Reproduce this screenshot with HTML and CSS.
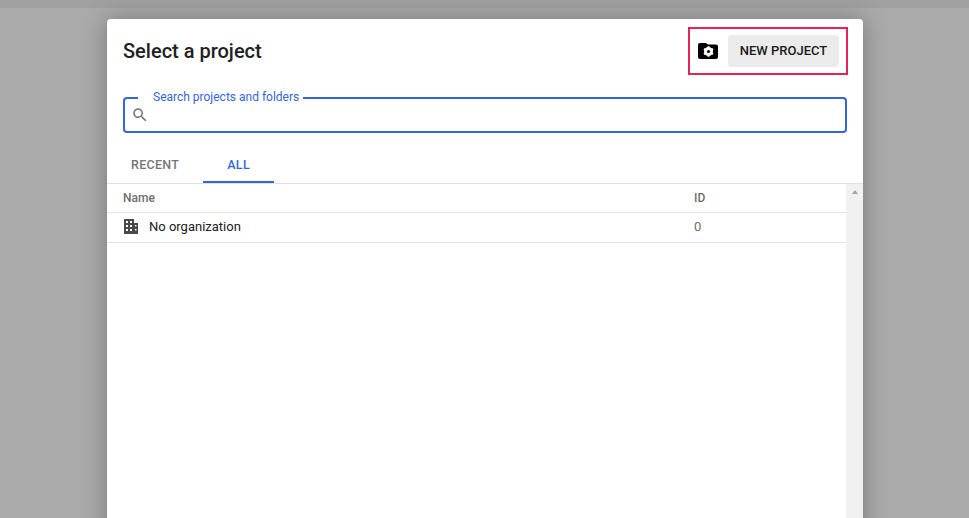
FILE: index.html
```html
<!DOCTYPE html>
<html>
<head>
    <title>Select a project</title>
    <link rel="stylesheet" href="styles.css">
</head>
<body>
    <div class="top-band"></div>

    <div class="dialog">
        <div class="dialog-header">
            <h1 class="dialog-title">Select a project</h1>
            <div class="actions">
                <svg class="folder-icon" viewBox="0 0 20 16" width="20" height="16">
                    <path fill="#000" d="M2 0h6l2 1.500h8a2 2 0 0 1 2 2V14a2 2 0 0 1-2 2H2a2 2 0 0 1-2-2V2a2 2 0 0 1 2-2z" />
                    <circle cx="10.500" cy="8.500" r="3.300" fill="none" stroke="#fff" stroke-width="2.400" />
                    <path stroke="#fff" stroke-width="2" d="M10.500 3.300v10.400M6 5.900l9 5.200M6 11.100l9-5.200" />
                    <circle cx="10.500" cy="8.500" r="1.500" fill="#000" />
                </svg>
                <button class="new-project">NEW PROJECT</button>
            </div>
        </div>

        <div class="search-wrap">
            <div class="search-box">
                <label class="search-label" for="search">Search projects and folders</label>
                <svg class="search-icon" viewBox="0 0 24 24" width="18" height="18">
                    <path fill="#757575" d="M15.500 14h-.790l-.280-.270C15.410 12.590 16 11.110 16 9.500 16 5.910 13.090 3 9.500 3S3 5.910 3 9.500 5.910 16 9.500 16c1.610 0 3.090-.590 4.230-1.570l.270.280v.790l5 4.990L20.490 19l-4.990-5zm-6 0C7.010 14 5 11.990 5 9.500S7.010 5 9.500 5 14 7.010 14 9.500 11.990 14 9.500 14z" />
                </svg>
                <input class="search-input" id="search" type="text">
            </div>
        </div>

        <div class="tabs">
            <div class="tab">RECENT</div>
            <div class="tab tab-active">ALL</div>
        </div>

        <div class="list-area">
            <div class="list">
                <div class="row row-head">
                    <div class="col-name">Name</div>
                    <div class="col-id">ID</div>
                </div>
                <div class="row row-item">
                    <div class="col-name">
                        <svg class="org-icon" viewBox="0 0 16 16" width="16" height="16">
                            <path fill="#484848" fill-rule="evenodd" d="M1 0h10v4h4v11H1zM3 2v2h2V2zM7 2v2h2V2zM3 6v2h2V6zM7 6v2h2V6zM3 10v2h2v-2zM7 10v2h2v-2zM12 6v1.500h1.500V6zM12 10v1.500h1.500V10z" />
                        </svg>
                        No organization
                    </div>
                    <div class="col-id">0</div>
                </div>
            </div>
            <div class="scrollbar">
                <div class="scroll-arrow"></div>
            </div>
        </div>
    </div>
</body>
</html>
```

FILE: styles.css
```css
html, body {
    height: 100%;
}

body {
    margin: 0;
    overflow: hidden;
    background-color: #aaaaaa;
    font-family: Roboto, Arial, sans-serif;
    color: #212121;
    display: flex;
    flex-direction: column;
    align-items: flex-start;
}

.top-band {
    align-self: stretch;
    flex: none;
    height: 8px;
    background-color: #a0a0a0;
}

.dialog {
    flex: none;
    width: 756px;
    height: 600px;
    margin: 11px 0 0 107px;
    background-color: white;
    border-radius: 4px 4px 0 0;
    box-shadow: 0 0 24px rgba(0, 0, 0, 0.3);
    display: flex;
    flex-direction: column;
}

.dialog-header {
    display: flex;
    justify-content: space-between;
    align-items: center;
    height: 64px;
    padding: 0 15px 0 16px;
}

.dialog-title {
    margin: 0;
    font-size: 20px;
    font-weight: 500;
    color: #212121;
}

.actions {
    display: flex;
    align-items: center;
    box-sizing: border-box;
    width: 160px;
    height: 48px;
    padding-left: 8px;
    border: 2px solid #e8235a;
}

.folder-icon {
    flex: none;
}

.new-project {
    margin-left: 10px;
    width: 111px;
    height: 32px;
    padding: 0 0 1px;
    border: none;
    border-radius: 4px;
    background-color: #ebebeb;
    color: #1a1a1a;
    font-family: Roboto, Arial, sans-serif;
    font-size: 13px;
    font-weight: 500;
}

.search-wrap {
    padding: 14px 16px 0;
}

.search-box {
    position: relative;
    display: flex;
    align-items: center;
    height: 36px;
    box-sizing: border-box;
    border: 2px solid #3367d6;
    border-radius: 4px;
}

.search-label {
    position: absolute;
    top: -9px;
    left: 13px;
    padding: 0 4px 0 15px;
    background-color: white;
    color: #3367d6;
    font-size: 12px;
    line-height: 14px;
}

.search-icon {
    flex: none;
    margin-left: 6px;
}

.search-input {
    flex: 1;
    border: none;
    outline: none;
    background: none;
    font-size: 14px;
}

.tabs {
    display: flex;
    height: 36px;
    margin-top: 14px;
    border-bottom: 1px solid #e0e0e0;
}

.tab {
    height: 36px;
    box-sizing: border-box;
    padding: 10px 24px 0;
    color: #757575;
    font-size: 12.500px;
    font-weight: 500;
    letter-spacing: 0.3px;
}

.tab-active {
    color: #3367d6;
    border-bottom: 2px solid #3367d6;
}

.list-area {
    flex: 1;
    display: flex;
}

.list {
    flex: 1;
}

.row {
    display: flex;
    align-items: center;
    padding: 0 16px;
    border-bottom: 1px solid #e0e0e0;
    font-size: 13px;
}

.row-head {
    height: 28px;
    color: #6e6e6e;
    font-size: 12px;
    font-weight: 500;
}

.row-item {
    height: 27px;
    padding-bottom: 2px;
    color: #212121;
}

.col-name {
    width: 571px;
    display: flex;
    align-items: center;
}

.col-id {
    color: #6e6e6e;
}

.org-icon {
    margin-right: 10px;
}

.scrollbar {
    flex: none;
    width: 17px;
    background-color: #f1f1f1;
    display: flex;
    justify-content: center;
    padding-top: 6px;
    box-sizing: border-box;
}

.scroll-arrow {
    width: 0;
    height: 0;
    border-left: 3.500px solid transparent;
    border-right: 3.500px solid transparent;
    border-bottom: 4px solid #a3a3a3;
}
```
